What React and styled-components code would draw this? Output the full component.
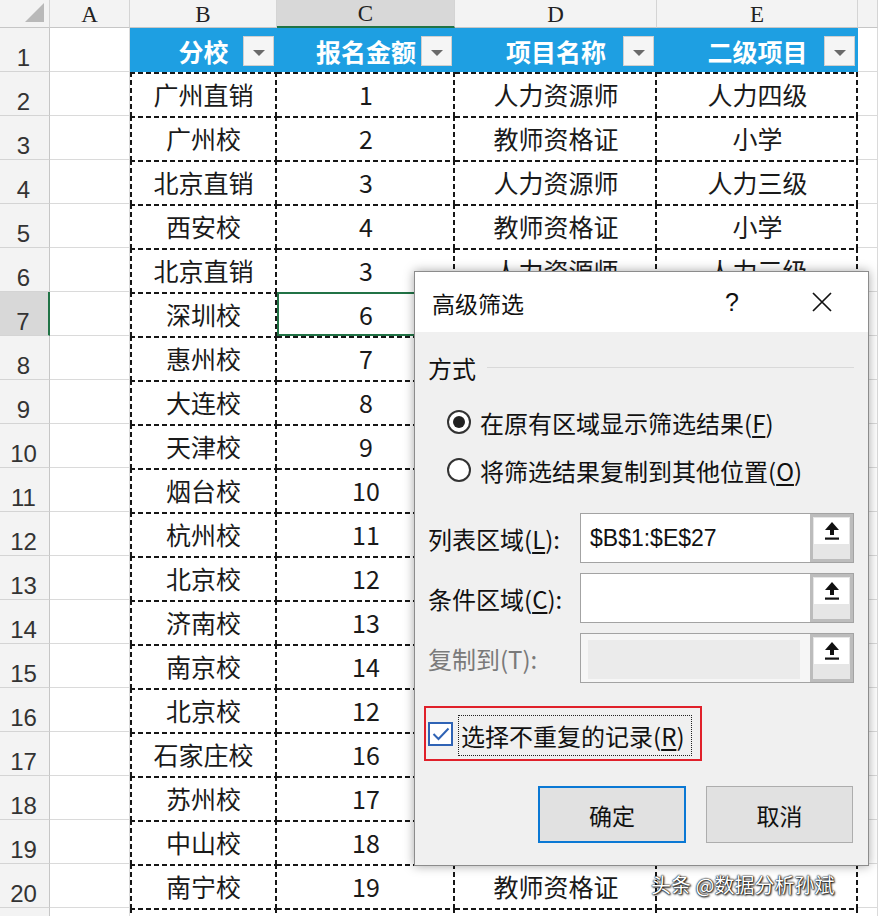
import styled, { createGlobalStyle } from "styled-components";

const GlobalStyle = createGlobalStyle`
  body {
    margin: 0;
    background: #fff;
    overflow: hidden;
  }
  * {
    box-sizing: border-box;
  }
`;

const CJK = `"Noto Sans CJK SC", "Noto Sans", sans-serif`;

// B, C, D, E for rows 2..21
const rows = [
  ["广州直销", "1", "人力资源师", "人力四级"],
  ["广州校", "2", "教师资格证", "小学"],
  ["北京直销", "3", "人力资源师", "人力三级"],
  ["西安校", "4", "教师资格证", "小学"],
  ["北京直销", "3", "人力资源师", "人力三级"],
  ["深圳校", "6", "人力资源师", "人力四级"],
  ["惠州校", "7", "教师资格证", "小学"],
  ["大连校", "8", "人力资源师", "人力三级"],
  ["天津校", "9", "教师资格证", "初中"],
  ["烟台校", "10", "人力资源师", "人力二级"],
  ["杭州校", "11", "教师资格证", "小学"],
  ["北京校", "12", "人力资源师", "人力三级"],
  ["济南校", "13", "教师资格证", "高中"],
  ["南京校", "14", "人力资源师", "人力四级"],
  ["北京校", "12", "人力资源师", "人力三级"],
  ["石家庄校", "16", "教师资格证", "小学"],
  ["苏州校", "17", "人力资源师", "人力二级"],
  ["中山校", "18", "教师资格证", "初中"],
  ["南宁校", "19", "教师资格证", ""],
  ["", "", "", ""],
];

const headers = ["分校", "报名金额", "项目名称", "二级项目"];
const letters = ["A", "B", "C", "D", "E", ""];

const ACTIVE_ROW = 7;
const ACTIVE_COL = 2; // C

export default function App() {
  return (
    <>
      <GlobalStyle />
      <Sheet>
        <Corner />
        {letters.map((l, i) => (
          <ColHead key={i} $active={i === ACTIVE_COL}>
            {l}
          </ColHead>
        ))}

        <RowHead>1</RowHead>
        <Blank />
        {headers.map((h) => (
          <TitleCell key={h}>
            {h}
            <FilterBtn />
          </TitleCell>
        ))}
        <Blank />

        {rows.map((r, idx) => {
          const n = idx + 2;
          return [
            <RowHead key={`h${n}`} $active={n === ACTIVE_ROW}>
              {n}
            </RowHead>,
            <Blank key={`a${n}`} />,
            ...r.map((v, c) => (
              <DataCell
                key={`${n}-${c}`}
                $first={c === 0}
                $active={n === ACTIVE_ROW && c === 1}
              >
                {v}
              </DataCell>
            )),
            <Blank key={`f${n}`} />,
          ];
        })}

        <Dialog>
          <TitleBar>
            <DialogTitle>高级筛选</DialogTitle>
            <HelpBtn>?</HelpBtn>
            <CloseBtn>
              <svg width="22" height="22" viewBox="0 0 22 22">
                <path d="M2 2 L20 20 M20 2 L2 20" stroke="#111" strokeWidth="1.7" />
              </svg>
            </CloseBtn>
          </TitleBar>

          <DialogBody>
            <GroupHead>
              方式
              <GroupLine />
            </GroupHead>

            <RadioRow>
              <Radio $checked />
              <span>
                在原有区域显示筛选结果(<U>F</U>)
              </span>
            </RadioRow>
            <RadioRow>
              <Radio />
              <span>
                将筛选结果复制到其他位置(<U>O</U>)
              </span>
            </RadioRow>

            <InputRows>
              <InputRow>
                <Label>
                  列表区域(<U>L</U>):
                </Label>
                <InputBox>
                  <Field>$B$1:$E$27</Field>
                  <UpBtn>
                    <UpIcon />
                  </UpBtn>
                </InputBox>
              </InputRow>
              <InputRow>
                <Label>
                  条件区域(<U>C</U>):
                </Label>
                <InputBox>
                  <Field />
                  <UpBtn>
                    <UpIcon />
                  </UpBtn>
                </InputBox>
              </InputRow>
              <InputRow>
                <Label $disabled>复制到(T):</Label>
                <InputBox>
                  <Field $disabled>
                    <DisabledFill />
                  </Field>
                  <UpBtn>
                    <UpIcon />
                  </UpBtn>
                </InputBox>
              </InputRow>
            </InputRows>

            <Highlight>
              <CheckBox>
                <svg width="18" height="14" viewBox="0 0 18 14">
                  <path d="M1.5 7 L6.5 12 L16.5 1.5" fill="none" stroke="#2f63b5" strokeWidth="2" />
                </svg>
              </CheckBox>
              <FocusLabel>
                选择不重复的记录(<U>R</U>)
              </FocusLabel>
            </Highlight>

            <ButtonRow>
              <Button $primary>确定</Button>
              <Button>取消</Button>
            </ButtonRow>
          </DialogBody>
        </Dialog>

        <Watermark>头条 @数据分析孙斌</Watermark>
      </Sheet>
    </>
  );
}

function UpIcon() {
  return (
    <UpTop>
      <svg width="18" height="20" viewBox="0 0 18 20">
        <path d="M9 1 L16 9 L11 9 L11 14 L7 14 L7 9 L2 9 Z" fill="#111" />
        <rect x="2" y="16.5" width="14" height="2.2" fill="#111" />
      </svg>
    </UpTop>
  );
}

const dash = (dir, pos, size) =>
  `repeating-linear-gradient(${dir}, #161616 0 5px, transparent 5px 8px) ${pos} / ${size} no-repeat`;

const Sheet = styled.div`
  position: relative;
  display: grid;
  grid-template-columns: 50px 80px 147px 178px 202px 201px 1fr;
  grid-template-rows: 28px repeat(21, 44px);
  width: 878px;
  height: 916px;
  overflow: hidden;
  font-family: ${CJK};
`;

const Corner = styled.div`
  position: relative;
  background: #f3f3f3;
  border-right: 1px solid #d4d4d4;
  border-bottom: 1px solid #c6c6c6;
  &::after {
    content: "";
    position: absolute;
    right: 5px;
    bottom: 5px;
    width: 19px;
    height: 19px;
    background: #b9b9b9;
    clip-path: polygon(100% 0, 100% 100%, 0 100%);
  }
`;

const ColHead = styled.div`
  display: flex;
  align-items: center;
  justify-content: center;
  background: ${(p) => (p.$active ? "#d8d8d8" : "#f3f3f3")};
  border-right: 1px solid #d4d4d4;
  border-bottom: ${(p) => (p.$active ? "2px solid #217346" : "1px solid #c6c6c6")};
  font-family: "Liberation Serif", serif;
  font-size: 23px;
  color: #222;
  padding-top: 2px;
`;

const RowHead = styled.div`
  display: flex;
  align-items: flex-end;
  justify-content: center;
  padding: 0 2px 1px 0;
  background: ${(p) => (p.$active ? "#d8d8d8" : "#f3f3f3")};
  border-right: ${(p) => (p.$active ? "2px solid #217346" : "1px solid #c6c6c6")};
  border-bottom: 1px solid #d4d4d4;
  font-family: "Liberation Sans", sans-serif;
  font-size: 24px;
  line-height: 24px;
  color: #333;
`;

const Blank = styled.div`
  background: #fff;
  border-right: 1px solid #dadada;
  border-bottom: 1px solid #dadada;
`;

const TitleCell = styled.div`
  position: relative;
  display: flex;
  align-items: center;
  justify-content: center;
  background: #1e9fe2;
  color: #fff;
  font-size: 25px;
  font-weight: 700;
  padding-top: 2px;
`;

const FilterBtn = styled.span`
  position: absolute;
  right: 3px;
  top: 8px;
  width: 31px;
  height: 30px;
  background: #f5f5f5;
  border: 1px solid #cfcfcf;
  &::after {
    content: "";
    position: absolute;
    left: 50%;
    top: 13px;
    margin-left: -6px;
    border-left: 6px solid transparent;
    border-right: 6px solid transparent;
    border-top: 6px solid #6a6a6a;
  }
`;

const DataCell = styled.div`
  display: flex;
  align-items: center;
  justify-content: center;
  font-size: 25px;
  color: #1a1a1a;
  background: ${(p) =>
    [
      dash("90deg", "0 0", "100% 2px"),
      dash("180deg", "100% 0", "2px 100%"),
      p.$first ? dash("180deg", "0 0", "2px 100%") : null,
      "#fff",
    ]
      .filter(Boolean)
      .join(", ")};
  box-shadow: ${(p) => (p.$active ? "inset 0 0 0 2px #217346" : "none")};
`;

const Dialog = styled.div`
  position: absolute;
  left: 414px;
  top: 271px;
  width: 455px;
  height: 595px;
  display: flex;
  flex-direction: column;
  border: 1px solid #8c8c8c;
  background: #f0f0f0;
  box-shadow: 0 0 10px rgba(0, 0, 0, 0.35);
  font-family: ${CJK};
  color: #111;
`;

const TitleBar = styled.div`
  display: flex;
  align-items: center;
  height: 60px;
  padding-left: 17px;
  background: #fff;
`;

const DialogTitle = styled.div`
  flex: 1;
  font-size: 23px;
  padding-top: 2px;
`;

const HelpBtn = styled.div`
  width: 40px;
  text-align: center;
  font-family: "Liberation Sans", sans-serif;
  font-size: 25px;
`;

const CloseBtn = styled.div`
  display: flex;
  justify-content: center;
  width: 60px;
  margin: 0 16px 0 40px;
`;

const DialogBody = styled.div`
  flex: 1;
  display: flex;
  flex-direction: column;
  padding: 20px 14px 0 13px;
  font-size: 24px;
`;

const GroupHead = styled.div`
  display: flex;
  align-items: center;
  height: 30px;
  margin-bottom: 16px;
  font-size: 24px;
`;

const GroupLine = styled.div`
  flex: 1;
  height: 1px;
  margin-left: 11px;
  background: #d9d9d9;
`;

const RadioRow = styled.div`
  display: flex;
  align-items: center;
  gap: 9px;
  height: 48px;
  padding-left: 19px;
`;

const Radio = styled.span`
  position: relative;
  width: 24px;
  height: 24px;
  border-radius: 50%;
  border: 2px solid #333;
  background: #fff;
  &::after {
    content: "";
    display: ${(p) => (p.$checked ? "block" : "none")};
    position: absolute;
    inset: 4px;
    border-radius: 50%;
    background: #222;
  }
`;

const U = styled.span`
  text-decoration: underline;
  text-underline-offset: 3px;
`;

const InputRows = styled.div`
  display: flex;
  flex-direction: column;
  gap: 10px;
  margin-top: 19px;
`;

const InputRow = styled.div`
  display: flex;
  align-items: center;
  height: 50px;
`;

const Label = styled.div`
  width: 152px;
  color: ${(p) => (p.$disabled ? "#7a7a7a" : "#111")};
`;

const InputBox = styled.div`
  flex: 1;
  display: flex;
  height: 50px;
  border: 1px solid #a3a3a3;
  background: #fff;
`;

const Field = styled.div`
  flex: 1;
  display: flex;
  align-items: center;
  padding: ${(p) => (p.$disabled ? "6px 10px 3px 7px" : "0 0 0 9px")};
  background: ${(p) => (p.$disabled ? "#f6f6f6" : "#fff")};
  font-family: "Liberation Sans", sans-serif;
  font-size: 23px;
  color: #111;
`;

const DisabledFill = styled.div`
  width: 100%;
  height: 100%;
  background: #ebebeb;
`;

const UpBtn = styled.div`
  width: 43px;
  display: flex;
  flex-direction: column;
  background: #e6e6e6;
  border: 3px solid #bcbcbc;
`;

const UpTop = styled.div`
  display: flex;
  align-items: center;
  justify-content: center;
  height: 26px;
  margin: 1px 1px 0;
  background: #fff;
`;

const Highlight = styled.div`
  display: flex;
  align-items: center;
  gap: 5px;
  width: 278px;
  height: 55px;
  margin: 23px 0 0 -4px;
  padding: 0 0 0 2px;
  border: 2px solid #e0202a;
`;

const CheckBox = styled.span`
  display: flex;
  align-items: center;
  justify-content: center;
  width: 25px;
  height: 24px;
  border: 2px solid #2f63b5;
  background: #fff;
`;

const FocusLabel = styled.span`
  display: flex;
  align-items: center;
  height: 41px;
  margin-top: 3px;
  padding: 0 6px 0 2px;
  border: 1px dotted #222;
  font-size: 24px;
`;

const ButtonRow = styled.div`
  display: flex;
  justify-content: flex-end;
  gap: 20px;
  margin: 25px 1px 0 0;
`;

const Button = styled.div`
  display: flex;
  align-items: center;
  justify-content: center;
  width: ${(p) => (p.$primary ? "148px" : "147px")};
  height: 57px;
  background: #e1e1e1;
  border: ${(p) => (p.$primary ? "2px solid #0a78d4" : "1px solid #adadad")};
  font-size: 23px;
  color: #111;
`;

const Watermark = styled.div`
  position: absolute;
  left: 651px;
  top: 870px;
  font-family: ${CJK};
  font-size: 20px;
  color: #fff;
  text-shadow: 0 0 2px #000, 1px 1px 2px #000, 0 0 1px #000;
  white-space: nowrap;
`;
